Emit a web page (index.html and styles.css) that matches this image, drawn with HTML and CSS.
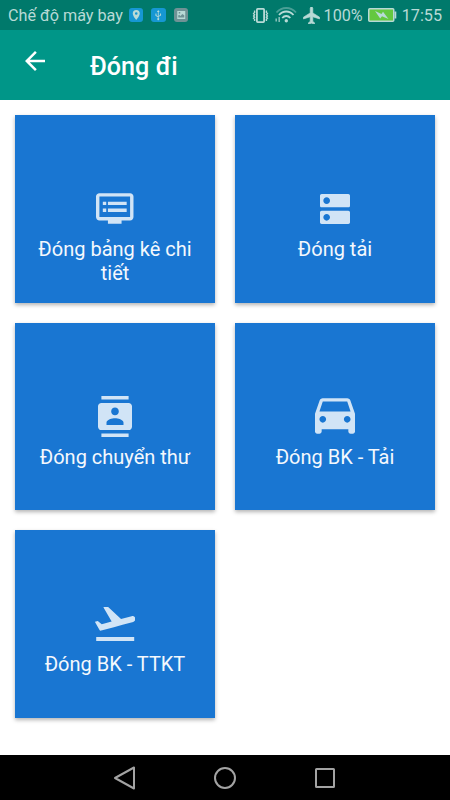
FILE: index.html
```html
<!DOCTYPE html>
<html lang="vi">
<head>
  <meta charset="UTF-8" />
  <meta name="viewport" content="width=device-width, initial-scale=1.0" />
  <title>Đóng đi</title>
  <link rel="stylesheet" href="styles.css">
</head>
<body>

  <div class="status-bar">
    <span class="carrier">Chế độ máy bay</span>
    <div class="notifications">
      <svg class="badge blue" viewBox="0 0 14 14"><path fill-rule="evenodd" d="M7 2a3.500 3.500 0 0 0-3.500 3.500C3.500 8 7 12 7 12s3.500-4 3.500-6.500A3.500 3.500 0 0 0 7 2zm0 2.200a1.300 1.300 0 1 1 0 2.600 1.300 1.300 0 0 1 0-2.600z"/></svg>
      <svg class="badge blue" viewBox="0 0 14 14"><path d="M7 2L5.600 4h1v4.200L5.200 7.300V5.500h-1v2.200l2.400 1.500v.9a1 1 0 1 0 .8 0V8.800l2.400-1.300V5.500h-1V7L7.400 7.900V4h1z"/></svg>
      <svg class="badge gray" viewBox="0 0 14 14"><path fill-rule="evenodd" d="M3 3h8v8H3zM4 9.500h6V7.200L8 6 6.300 8 4.800 6.800 4 7.500zM4.500 4v1.500H6V4z"/></svg>
    </div>
    <div class="system">
      <svg class="vibrate" viewBox="0 0 17 15">
        <rect x="4.900" y=".9" width="7.200" height="13.200" rx=".8" fill="none" stroke="currentColor" stroke-width="1.800"/>
        <path d="M2.600 2.500v2l-1 1 1 1.200-1 1.300 1 1.200-1 1 1 1v1.800M14.400 2.500v2l1 1-1 1.200 1 1.300-1 1.200 1 1-1 1v1.800" fill="none" stroke="currentColor" stroke-width="1.400"/>
      </svg>
      <svg class="wifi" viewBox="0 0 22 16" fill="none" stroke="currentColor" stroke-width="1.800">
        <path d="M1.500 5.500C7-.5 15.500-.5 21 5.500" opacity=".4"/>
        <path d="M4 8c4-4.700 10.500-4.700 14.500 0M7.200 11c2.300-2.700 5.800-2.700 8.100 0"/>
        <circle cx="11.300" cy="13.800" r="1.700" fill="currentColor" stroke="none"/>
        <path d="M1.200 11.500v3M4.200 10v5" stroke-width="1.500" opacity=".75"/>
      </svg>
      <svg class="plane" viewBox="2 2 19 20"><path stroke="currentColor" stroke-width=".8" d="M21 16v-2l-8-5V3.500c0-.83-.67-1.500-1.500-1.500S10 2.670 10 3.500V9l-8 5v2l8-2.500V19l-2 1.500V22l3.500-1 3.500 1v-1.500L13 19v-5.500l8 2.500z"/></svg>
      <span class="percent">100%</span>
      <svg class="battery" viewBox="0 0 29 14">
        <rect x=".75" y=".75" width="25" height="12.500" rx="1" fill="#64c840" stroke="currentColor" stroke-width="1.500"/>
        <path d="M26.500 3.500h1.800v7h-1.800z"/>
        <path d="M7 3l6.500 3 1.500-2.200L20.500 11 14 8.200l-1.800 2.300z"/>
      </svg>
      <span class="clock">17:55</span>
    </div>
  </div>

  <header class="toolbar">
    <svg class="back" viewBox="4 4 16 16"><path d="M20 11H7.830l5.590-5.590L12 4l-8 8 8 8 1.410-1.410L7.830 13H20v-2z"/></svg>
    <h1>Đóng đi</h1>
  </header>

  <main class="menu">
    <div class="card">
      <div class="icon">
        <svg class="icon-list" viewBox="1 3 22 18"><path d="M21 3H3c-1.100 0-2 .9-2 2v12c0 1.100.9 2 2 2h5v2h8v-2h5c1.100 0 1.990-.9 1.990-2L23 5c0-1.100-.9-2-2-2zm0 14H3V5h18v12zm-2-9H8v2h11V8zm0 4H8v2h11v-2zM7 8H5v2h2V8zm0 4H5v2h2v-2z"/></svg>
      </div>
      <div class="label">Đóng bảng kê chi tiết</div>
    </div>
    <div class="card">
      <div class="icon">
        <svg class="icon-dns" viewBox="3 3 18 18"><path d="M20 13H4c-.55 0-1 .45-1 1v6c0 .55.450 1 1 1h16c.55 0 1-.45 1-1v-6c0-.55-.45-1-1-1zM7 19c-1.100 0-2-.9-2-2s.9-2 2-2 2 .9 2 2-.9 2-2 2zM20 3H4c-.55 0-1 .45-1 1v6c0 .55.450 1 1 1h16c.55 0 1-.45 1-1V4c0-.55-.45-1-1-1zM7 9c-1.100 0-2-.9-2-2s.9-2 2-2 2 .9 2 2-.9 2-2 2z"/></svg>
      </div>
      <div class="label">Đóng tải</div>
    </div>
    <div class="card">
      <div class="icon">
        <svg class="icon-contacts" viewBox="2 0 20 24"><path d="M20 0H4v2h16V0zM4 24h16v-2H4v2zM20 4H4c-1.100 0-2 .9-2 2v12c0 1.100.9 2 2 2h16c1.100 0 2-.9 2-2V6c0-1.100-.9-2-2-2zm-8 2.750c1.240 0 2.250 1.010 2.250 2.250s-1.010 2.250-2.250 2.250S9.750 10.240 9.750 9 10.760 6.750 12 6.750zM17 17H7v-1.500c0-1.670 3.330-2.500 5-2.500s5 .83 5 2.500V17z"/></svg>
      </div>
      <div class="label">Đóng chuyển thư</div>
    </div>
    <div class="card">
      <div class="icon">
        <svg class="icon-car" viewBox="3 5 18 16"><path d="M18.920 6.010C18.720 5.420 18.160 5 17.500 5h-11c-.66 0-1.210.42-1.420 1.010L3 12v8c0 .55.450 1 1 1h1c.55 0 1-.45 1-1v-1h12v1c0 .55.450 1 1 1h1c.55 0 1-.45 1-1v-8l-2.080-5.990zM6.500 16c-.83 0-1.500-.67-1.500-1.500S5.670 13 6.500 13s1.500.67 1.500 1.500S7.330 16 6.500 16zm11 0c-.83 0-1.500-.67-1.500-1.500s.67-1.500 1.500-1.500 1.500.67 1.500 1.500-.67 1.500-1.500 1.500zM5 11l1.500-4.500h11L19 11H5z"/></svg>
      </div>
      <div class="label">Đóng BK - Tải</div>
    </div>
    <div class="card">
      <div class="icon">
        <svg class="icon-takeoff" viewBox="1.900 4 20.250 17"><path d="M2.500 19h19v2h-19zm19.570-9.360c-.21-.8-1.040-1.280-1.840-1.060L14.920 10l-6.900-6.430-1.930.51 4.140 7.170-4.970 1.330-1.970-1.540-1.450.39 1.820 3.160.77 1.330 1.600-.43 5.310-1.420 4.350-1.160L21 11.490c.81-.23 1.280-1.050 1.070-1.850z"/></svg>
      </div>
      <div class="label">Đóng BK - TTKT</div>
    </div>
  </main>

  <nav class="nav-bar">
    <svg viewBox="0 0 24 24"><path d="M21 1.500v21L2 12z"/></svg>
    <svg viewBox="0 0 24 24"><circle cx="12" cy="12" r="10"/></svg>
    <svg viewBox="0 0 24 24"><rect x="3" y="3" width="18" height="18" rx=".5"/></svg>
  </nav>

</body>
</html>
```

FILE: styles.css
```css
* {
  box-sizing: border-box;
}
body {
  margin: 0;
  height: 800px;
  display: flex;
  flex-direction: column;
  overflow: hidden;
  font-family: Roboto, sans-serif;
  background: #fff;
}
svg {
  display: block;
  fill: currentColor;
}

.status-bar {
  height: 30px;
  padding: 0 8px;
  display: flex;
  align-items: center;
  background: #00796b;
  color: #b8dad6;
  font-size: 16.2px;
  white-space: nowrap;
}
.notifications {
  display: flex;
  gap: 8px;
  margin-left: 6px;
}
.badge {
  width: 14.5px;
  height: 14px;
  border-radius: 3px;
}
.blue { background: #1697d3; }
.gray { background: #6f9295; }
.system {
  display: flex;
  align-items: center;
  margin-left: auto;
}
.vibrate { width: 17px; height: 15px; margin-right: 6px; }
.wifi { width: 22px; height: 16px; margin-right: 6px; fill: none; }
.plane { width: 17px; height: 17px; margin-right: 4px; }
.battery { width: 29px; height: 14px; margin: 0 5px; }

.toolbar {
  height: 70px;
  padding-left: 25px;
  display: flex;
  align-items: flex-start;
  background: #009688;
  color: #fff;
}
.back {
  width: 20px;
  height: 20px;
  margin-top: 21px;
}
.toolbar h1 {
  margin: 22px 0 0 45px;
  font-size: 25.2px;
  font-weight: 500;
  line-height: 30px;
}

.menu {
  flex: 1;
  display: grid;
  grid-template-columns: 200px 200px;
  grid-auto-rows: 187.5px;
  gap: 20px;
  align-content: start;
  padding: 15px;
}
.card {
  padding: 73px 20px 0;
  background: #1976d2;
  box-shadow: 0 2px 4px rgba(0, 0, 0, 0.3);
  text-align: center;
}
.icon {
  height: 41px;
  display: flex;
  align-items: center;
  justify-content: center;
  color: #d1e4f6;
}
.icon-list { width: 37.5px; height: 31px; }
.icon-dns { width: 30px; height: 30px; }
.icon-contacts { width: 34px; height: 41px; }
.icon-car { width: 40px; height: 36px; }
.icon-takeoff { width: 40.5px; height: 34px; }
.label {
  margin-top: 9px;
  color: #f4f8fd;
  font-size: 20px;
  line-height: 23.5px;
}

.nav-bar {
  height: 45px;
  display: flex;
  align-items: center;
  justify-content: center;
  gap: 76px;
  background: #000;
}
.nav-bar svg {
  width: 24px;
  height: 24px;
  fill: none;
  stroke: #a3a3a3;
  stroke-width: 2;
  stroke-linejoin: round;
}
```
